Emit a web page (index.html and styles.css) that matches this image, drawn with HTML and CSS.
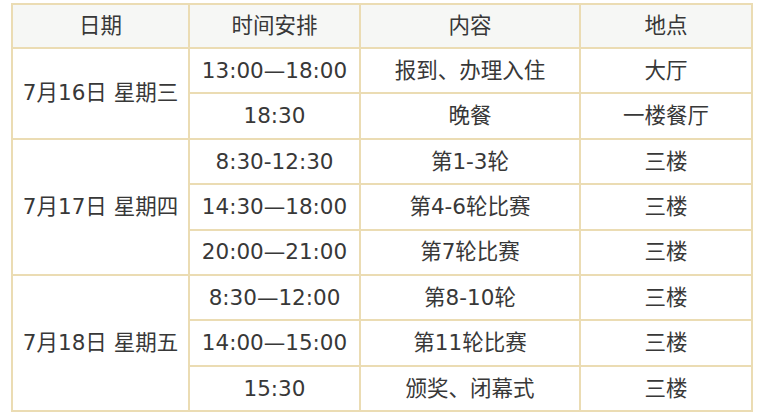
FILE: index.html
```html
<!DOCTYPE html>
<html lang="zh">
<head>
<meta charset="utf-8">
<link rel="stylesheet" href="styles.css">
</head>
<body>
<table class="schedule">
  <colgroup>
    <col class="c1"><col class="c2"><col class="c3"><col class="c4">
  </colgroup>
  <thead>
    <tr class="head"><th>日期</th><th>时间安排</th><th>内容</th><th>地点</th></tr>
  </thead>
  <tbody>
    <tr><td rowspan="2" class="date">7月16日 星期三</td><td>13:00—18:00</td><td>报到、办理入住</td><td>大厅</td></tr>
    <tr><td>18:30</td><td>晚餐</td><td>一楼餐厅</td></tr>
    <tr><td rowspan="3" class="date">7月17日 星期四</td><td>8:30-12:30</td><td>第1-3轮</td><td>三楼</td></tr>
    <tr><td>14:30—18:00</td><td>第4-6轮比赛</td><td>三楼</td></tr>
    <tr><td>20:00—21:00</td><td>第7轮比赛</td><td>三楼</td></tr>
    <tr><td rowspan="3" class="date">7月18日 星期五</td><td>8:30—12:00</td><td>第8-10轮</td><td>三楼</td></tr>
    <tr><td>14:00—15:00</td><td>第11轮比赛</td><td>三楼</td></tr>
    <tr><td>15:30</td><td>颁奖、闭幕式</td><td>三楼</td></tr>
  </tbody>
</table>
</body>
</html>
```
FILE: styles.css
```css
html, body {
  margin: 0;
  padding: 0;
  background: #ffffff;
}
body {
  padding: 3px 0 0 11px;
  font-family: "DejaVu Sans", "Noto Sans CJK SC", sans-serif;
  font-size: 21.5px;
  color: #383838;
}
.schedule {
  border-collapse: collapse;
  width: 740px;
  table-layout: fixed;
}
.c1 { width: 177px; }
.c2 { width: 171px; }
.c3 { width: 220px; }
.c4 { width: 172px; }
.schedule th,
.schedule td {
  border: 2px solid #ebdcb3;
  text-align: center;
  vertical-align: middle;
  padding: 0;
  font-weight: normal;
  line-height: 1.2;
}
.head th {
  background: #f6f7f5;
  height: 42px;
}
.schedule tbody td {
  height: 43.4px;
}
.schedule tbody td.date {
  height: auto;
}
```
